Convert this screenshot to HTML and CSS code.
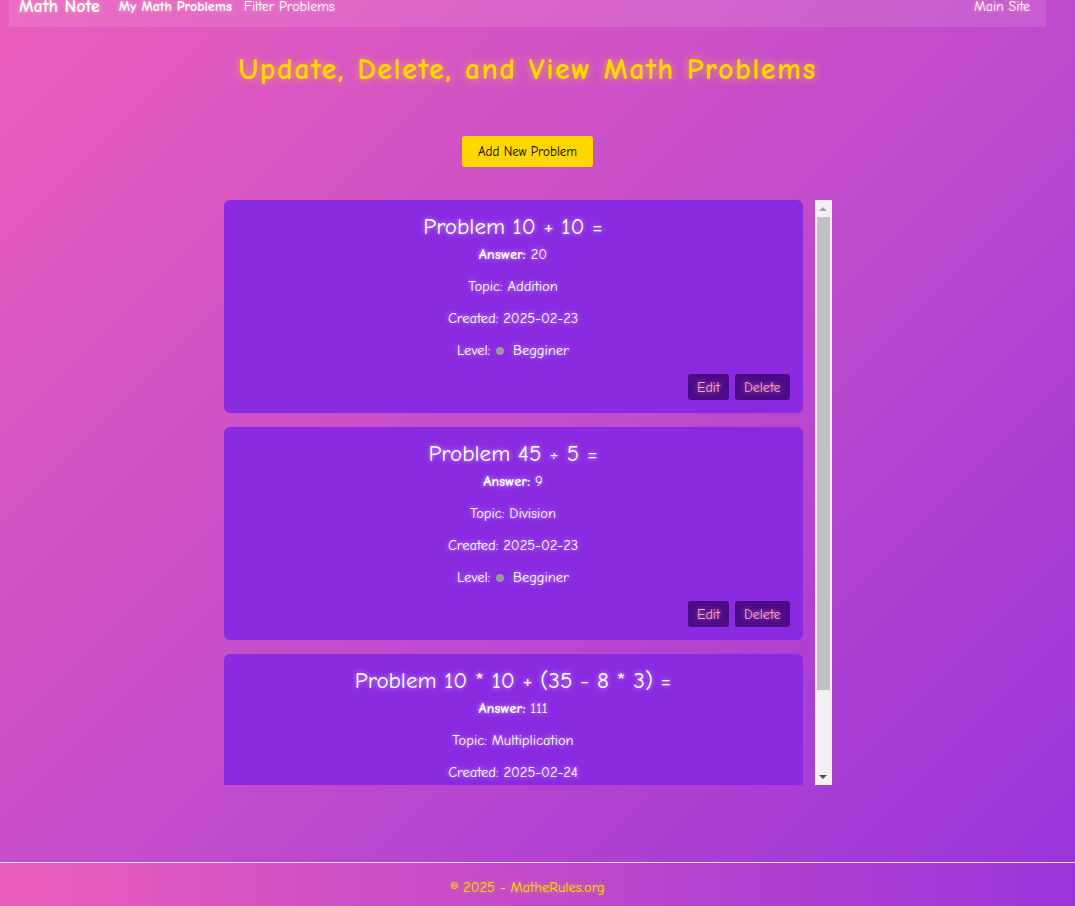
FILE: index.html
```html
<!DOCTYPE html>
<html lang="en">
<head>
<meta charset="utf-8">
<title>Math Note - My Math Problems</title>
<link rel="stylesheet" href="styles.css">
</head>
<body>
<div class="page">
  <nav class="navbar">
    <div class="nav-left">
      <a class="brand" href="#">Math Note</a>
      <a class="nav-link active" href="#">My Math Problems</a>
      <a class="nav-link" href="#">Filter Problems</a>
    </div>
    <a class="nav-link" href="#">Main Site</a>
  </nav>

  <main class="main">
    <h1 class="title">Update, Delete, and View Math Problems</h1>
    <button class="add-btn">Add New Problem</button>

    <div class="scroll-wrap">
      <div class="list">
        <div class="card">
          <h3 class="card-title">Problem 10 + 10 =</h3>
          <p class="line"><strong>Answer:</strong> 20</p>
          <p class="line">Topic: Addition</p>
          <p class="line">Created: 2025-02-23</p>
          <p class="line">Level: <span class="dot"></span> Begginer</p>
          <div class="actions">
            <button class="act-btn">Edit</button>
            <button class="act-btn">Delete</button>
          </div>
        </div>
        <div class="card">
          <h3 class="card-title">Problem 45 ÷ 5 =</h3>
          <p class="line"><strong>Answer:</strong> 9</p>
          <p class="line">Topic: Division</p>
          <p class="line">Created: 2025-02-23</p>
          <p class="line">Level: <span class="dot"></span> Begginer</p>
          <div class="actions">
            <button class="act-btn">Edit</button>
            <button class="act-btn">Delete</button>
          </div>
        </div>
        <div class="card">
          <h3 class="card-title">Problem 10 * 10 + (35 - 8 * 3) =</h3>
          <p class="line"><strong>Answer:</strong> 111</p>
          <p class="line">Topic: Multiplication</p>
          <p class="line">Created: 2025-02-24</p>
          <p class="line">Level: <span class="dot"></span> Begginer</p>
          <div class="actions">
            <button class="act-btn">Edit</button>
            <button class="act-btn">Delete</button>
          </div>
        </div>
      </div>
      <div class="scrollbar" aria-hidden="true">
        <span class="sb-btn"><span class="arrow-up"></span></span>
        <span class="sb-track"><span class="sb-thumb"></span></span>
        <span class="sb-btn"><span class="arrow-down"></span></span>
      </div>
    </div>
  </main>
</div>

<footer class="footer">
  <p>© 2025 - MatheRules.org</p>
</footer>
</body>
</html>
```

FILE: styles.css
```css
* { box-sizing: border-box; }

html, body {
  margin: 0;
  padding: 0;
}

body {
  font-family: "Comic Sans MS", "Comic Neue", Lato, sans-serif;
  background: linear-gradient(135deg, #ea5dbd 0%, #c24ccb 50%, #9833da 100%);
  min-height: 906px;
  overflow: hidden;
  color: #fff;
}

.page {
  margin-left: 9px;
  width: 1037px;
}

.navbar {
  margin-top: -14px;
  height: 41px;
  background: rgba(255, 255, 255, 0.1);
  display: flex;
  align-items: center;
  justify-content: space-between;
  padding: 0 16px 0 10px;
}

.nav-left {
  display: flex;
  align-items: center;
  gap: 12px;
}

.navbar a {
  color: #fff;
  text-decoration: none;
  text-shadow: 0 0 4px rgba(255, 182, 193, 0.9);
}

.brand {
  font-size: 18px;
  font-weight: bold;
  margin-right: 7px;
}

.nav-link {
  font-size: 14px;
}

.nav-link.active {
  font-weight: bold;
}

.main {
  display: flex;
  flex-direction: column;
  align-items: center;
}

.title {
  margin: 25px 0 0;
  font-size: 30px;
  letter-spacing: 1.5px;
  line-height: 36px;
  font-weight: bold;
  color: #ffd700;
  text-shadow: 0 0 8px rgba(255, 215, 0, 0.7);
}

.add-btn {
  margin-top: 48px;
  height: 31px;
  padding: 0 16px;
  background: #ffd700;
  color: #000;
  border: none;
  border-radius: 3px;
  font-family: inherit;
  font-size: 13px;
}

.scroll-wrap {
  margin-top: 33px;
  width: 608px;
  height: 585px;
  display: flex;
}

.list {
  flex: 1;
  overflow: hidden;
}

.scrollbar {
  width: 17px;
  background: #f1f1f1;
  display: flex;
  flex-direction: column;
}

.sb-btn {
  height: 17px;
  display: flex;
  align-items: center;
  justify-content: center;
}

.arrow-up {
  width: 0;
  height: 0;
  border-left: 4px solid transparent;
  border-right: 4px solid transparent;
  border-bottom: 4px solid #a3a3a3;
}

.arrow-down {
  width: 0;
  height: 0;
  border-left: 4px solid transparent;
  border-right: 4px solid transparent;
  border-top: 4px solid #505050;
}

.sb-track {
  flex: 1;
  padding: 0 2px;
}

.sb-thumb {
  display: block;
  height: 473px;
  background: #c1c1c1;
}

.card {
  width: 579px;
  margin: 0 12px 14px 0;
  background: #8a2be2;
  border-radius: 6px;
  padding: 13px 13px 13px;
  text-align: center;
  text-shadow: 0 0 5px rgba(255, 255, 255, 0.6);
}

.card-title {
  margin: 0 0 5px;
  font-size: 23px;
  line-height: 28px;
  font-weight: normal;
}

.line {
  margin: 0 0 14px;
  font-size: 14.5px;
  line-height: 18px;
}

.dot {
  display: inline-block;
  width: 8px;
  height: 8px;
  border-radius: 50%;
  background: #999;
  margin: 0 4px 0 1px;
  vertical-align: 0;
}

.actions {
  display: flex;
  justify-content: flex-end;
  gap: 6px;
}

.act-btn {
  height: 26px;
  padding: 0 9px;
  background: #4b0a87;
  color: #f6a6c8;
  border: none;
  border-radius: 3px;
  font-family: inherit;
  font-size: 14px;
  text-shadow: 0 0 5px rgba(255, 160, 200, 0.8);
}

.footer {
  margin-top: 77px;
  border-top: 1px solid #ddd;
  background: linear-gradient(90deg, #ea5dbd 0%, #9a34d9 100%);
  text-align: center;
  padding: 16px 20px 20px 0;
}

.footer p {
  margin: 0;
  font-size: 14.5px;
  line-height: 18px;
  color: #ffd700;
  text-shadow: 0 0 6px rgba(255, 215, 0, 0.7);
}
```
